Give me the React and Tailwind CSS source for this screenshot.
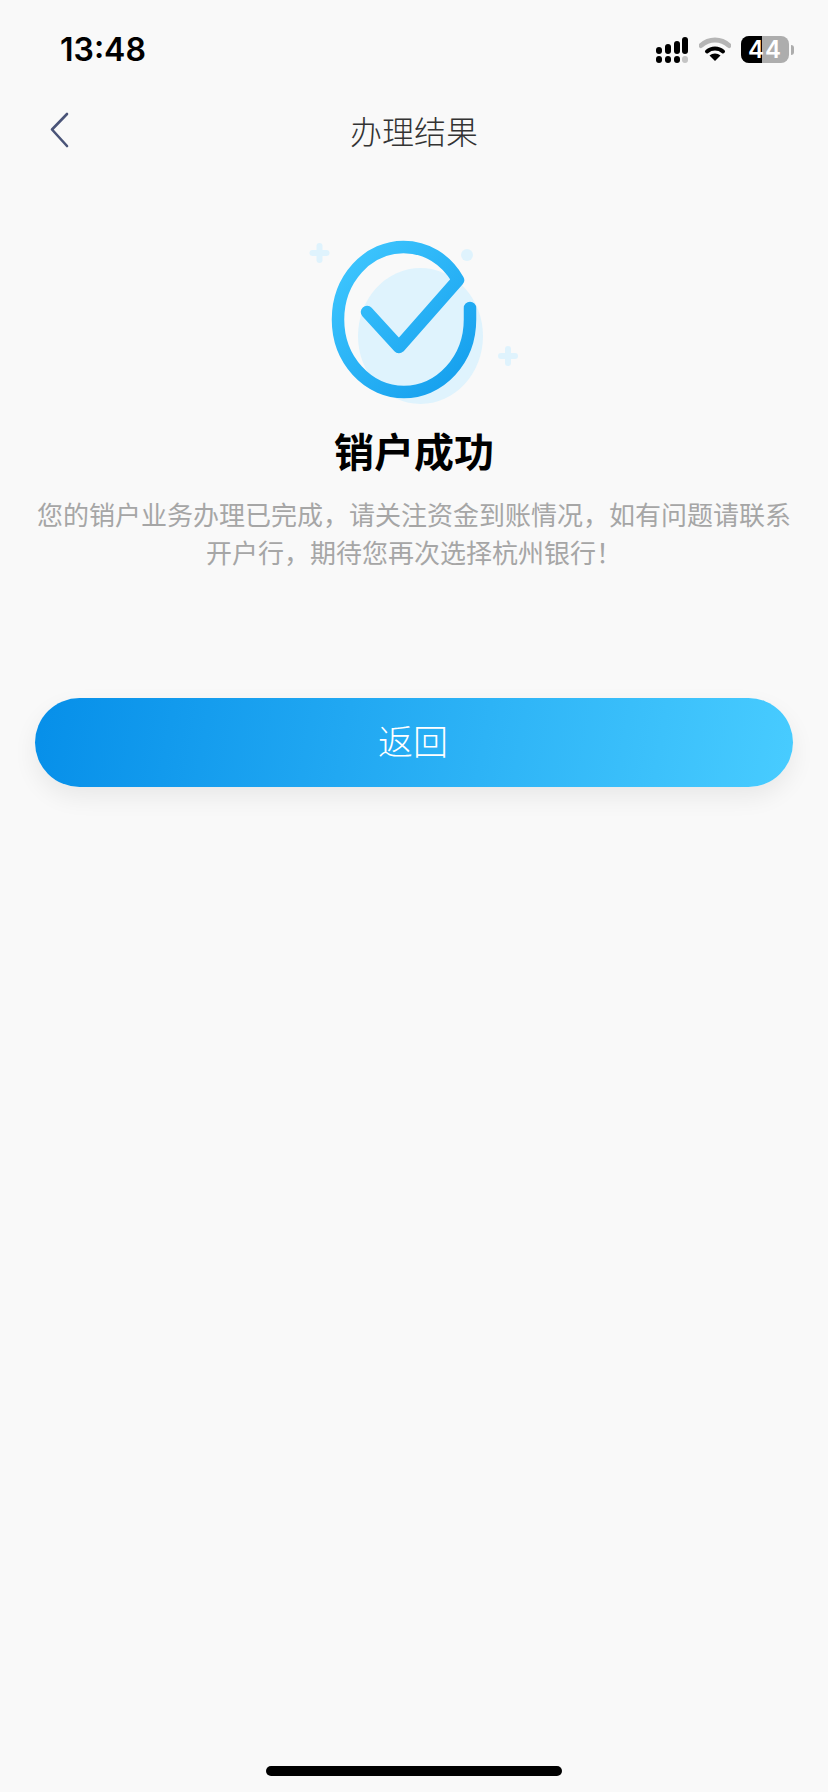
import React from 'react';

const CJK = 'font-["Noto_Sans_CJK_SC","Noto_Sans",sans-serif]';

const StatusBar = () => (
  <div className="h-[98px] flex justify-between items-start pl-[60px] pr-[34px] pt-[36px]">
    <span className='font-["Inter",sans-serif] font-semibold text-[32px] leading-[28px] text-black'>13:48</span>
    <div className="flex items-center gap-[10px]">
      <svg width="34" height="27" viewBox="0 0 34 27">
        <rect x="1" y="11" width="6" height="7" rx="3" fill="#000" />
        <rect x="10" y="8" width="6" height="10" rx="3" fill="#000" />
        <rect x="19" y="5" width="6" height="13" rx="3" fill="#000" />
        <rect x="27" y="1" width="6" height="17" rx="3" fill="#000" />
        <rect x="1" y="20" width="6" height="7" rx="3" fill="#000" />
        <rect x="10" y="20" width="6" height="7" rx="3" fill="#000" />
        <rect x="19" y="20" width="6" height="7" rx="3" fill="#000" />
        <rect x="27" y="20" width="6" height="7" rx="3" fill="#c4c4c4" />
      </svg>
      <svg width="32" height="25" viewBox="0 0 32 25">
        <path d="M2 8.5C10 1 22 1 30 8.5" fill="none" stroke="#b5b5b5" strokeWidth="5" strokeLinecap="round" />
        <path d="M8 14.5C12.5 10.5 19.5 10.5 24 14.5" fill="none" stroke="#000" strokeWidth="4" strokeLinecap="round" />
        <path d="M16 24L10.5 18.5C13.5 15.8 18.5 15.8 21.5 18.5Z" fill="#000" />
      </svg>
      <div className="flex items-center">
        <div className="relative w-[48px] h-[27px] rounded-[8px] overflow-hidden flex bg-[#adadad]">
          <div className="w-[21px] h-full bg-black" />
          <span className='absolute inset-0 flex items-center justify-center font-["Inter",sans-serif] font-semibold text-[24px] leading-none tracking-[1px] text-white'>44</span>
        </div>
        <div className="w-[3px] h-[10px] ml-[2px] rounded-r-full bg-[#adadad]" />
      </div>
    </div>
  </div>
);

const NavBar = () => (
  <div className="relative h-[64px] flex items-center justify-center">
    <svg className="absolute left-[48px] top-[14px]" width="22" height="36" viewBox="0 0 22 36">
      <path d="M19 2L4 17.5L19 34" fill="none" stroke="#4a5478" strokeWidth="2.6" strokeLinecap="round" strokeLinejoin="round" />
    </svg>
    <span className={`${CJK} font-light text-[32px] leading-none text-[#333333]`}>办理结果</span>
  </div>
);

const SuccessIcon = () => (
  <svg width="220" height="184" viewBox="304 230 220 184">
    <defs>
      <linearGradient id="ring" gradientUnits="userSpaceOnUse" x1="335" y1="250" x2="475" y2="390">
        <stop offset="0" stopColor="#40c8ff" />
        <stop offset="1" stopColor="#129cec" />
      </linearGradient>
    </defs>
    <ellipse cx="420.5" cy="336" rx="62.5" ry="68" fill="#dff3fd" />
    <circle cx="467" cy="255" r="6" fill="#dff3fd" />
    <path d="M319.5 246V260M312.5 253H326.5" stroke="#dff3fd" strokeWidth="6" strokeLinecap="round" />
    <path d="M508 349V363M501 356H515" stroke="#dff3fd" strokeWidth="6" strokeLinecap="round" />
    <path
      d="M367 312L399 347L458 280C446 259 426 247 403.5 247A65.5 72.5 0 0 0 338 319.5A66 72.5 0 0 0 404 392A66 72.5 0 0 0 470 319.5L470 308"
      fill="none"
      stroke="url(#ring)"
      strokeWidth="12.5"
      strokeLinecap="round"
      strokeLinejoin="round"
    />
  </svg>
);

const App = () => {
  return (
    <div className={`${CJK} relative min-h-[1792px] flex flex-col bg-[#f9f9f9]`}>
      <StatusBar />
      <NavBar />

      <div className="flex flex-col items-center pt-[68px]">
        <SuccessIcon />
        <h1 className="mt-[11px] text-[40px] leading-[50px] font-bold text-black">销户成功</h1>
        <p className="mt-[20px] px-[36px] text-center text-[26px] leading-[38px] font-normal text-[#a6a6a6]">
          您的销户业务办理已完成，请关注资金到账情况，如有问题请联系开户行，期待您再次选择杭州银行！
        </p>
      </div>

      <div className="px-[35px] mt-[127px]">
        <button className="w-full h-[89px] pb-[4px] pr-[2px] rounded-full bg-[linear-gradient(100deg,#068fe9,#48ccff)] shadow-[0_10px_24px_rgba(0,0,0,0.07)] text-[35px] font-light text-white">
          返回
        </button>
      </div>

      <div className="mt-auto mb-[16px] self-center w-[296px] h-[10px] rounded-full bg-black" />
    </div>
  );
};

export default App;
